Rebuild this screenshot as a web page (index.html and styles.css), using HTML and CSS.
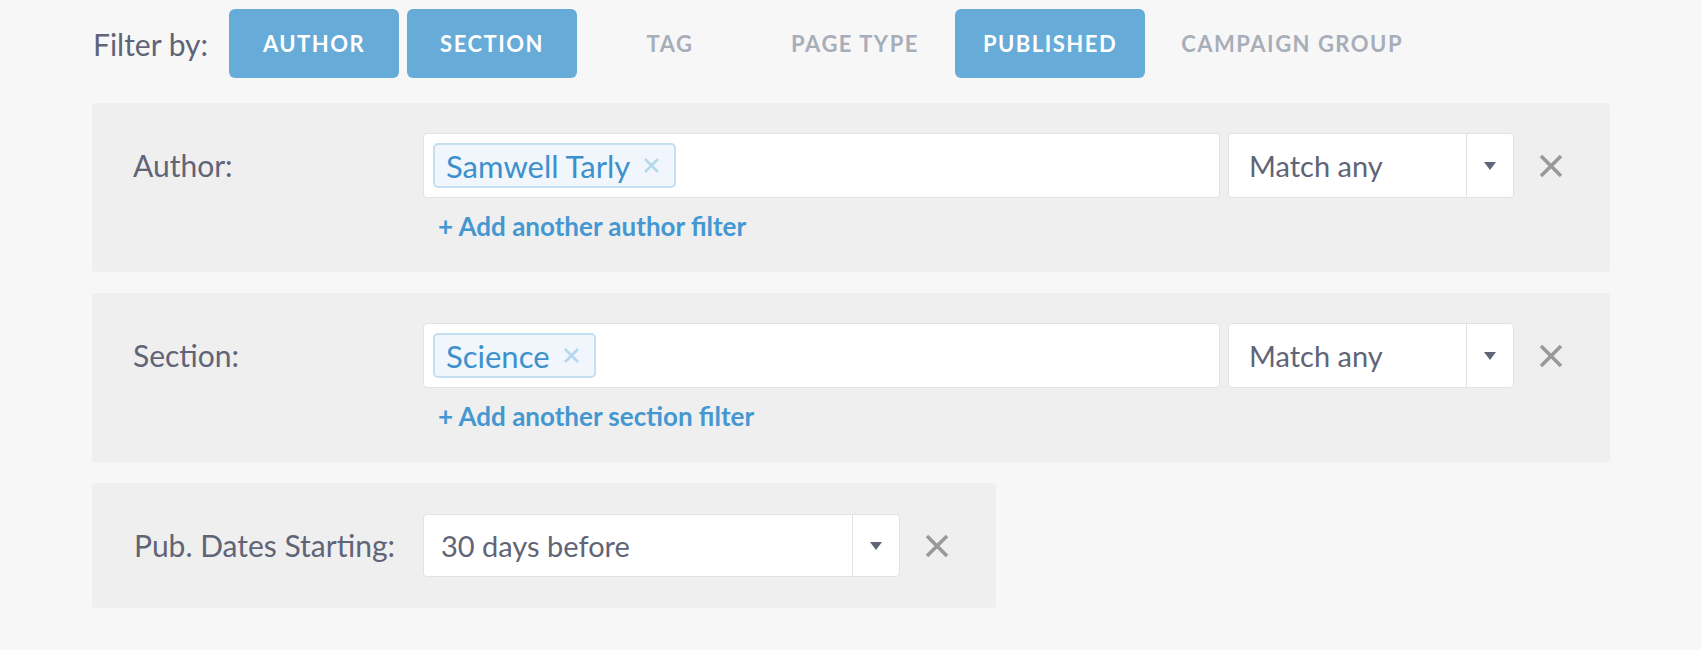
FILE: index.html
```html
<!DOCTYPE html>
<html lang="en">
<head>
    <meta charset="UTF-8">
    <title>Filters</title>
    <link rel="stylesheet" href="styles.css">
</head>
<body>
    <!-- Barre de choix des filtres -->
    <div class="filter-bar">
        <span class="filter-title">Filter by:</span>
        <div class="filter-buttons">
            <button class="filter-btn active">Author</button>
            <button class="filter-btn active">Section</button>
            <button class="filter-btn">Tag</button>
            <button class="filter-btn">Page Type</button>
            <button class="filter-btn active">Published</button>
            <button class="filter-btn">Campaign Group</button>
        </div>
    </div>

    <div class="panels">
        <!-- Filtre auteur -->
        <div class="panel">
            <div class="panel-label">Author:</div>
            <div class="panel-body">
                <div class="panel-row">
                    <div class="tag-input">
                        <span class="chip">Samwell Tarly<svg class="chip-x" width="17" height="17" viewBox="0 0 17 17"><path d="M2 2L15 15M15 2L2 15" stroke="#b5d8ee" stroke-width="2.6"/></svg></span>
                    </div>
                    <div class="select match">
                        <span class="select-value">Match any</span>
                        <span class="select-arrow"><span class="caret"></span></span>
                    </div>
                    <svg class="close" width="24" height="24" viewBox="0 0 24 24"><path d="M2 2L22 22M22 2L2 22" stroke="#999" stroke-width="3.6"/></svg>
                </div>
                <a class="add-link" href="#">+ Add another author filter</a>
            </div>
        </div>

        <!-- Filtre section -->
        <div class="panel">
            <div class="panel-label">Section:</div>
            <div class="panel-body">
                <div class="panel-row">
                    <div class="tag-input">
                        <span class="chip">Science<svg class="chip-x" width="17" height="17" viewBox="0 0 17 17"><path d="M2 2L15 15M15 2L2 15" stroke="#b5d8ee" stroke-width="2.6"/></svg></span>
                    </div>
                    <div class="select match">
                        <span class="select-value">Match any</span>
                        <span class="select-arrow"><span class="caret"></span></span>
                    </div>
                    <svg class="close" width="24" height="24" viewBox="0 0 24 24"><path d="M2 2L22 22M22 2L2 22" stroke="#999" stroke-width="3.6"/></svg>
                </div>
                <a class="add-link" href="#">+ Add another section filter</a>
            </div>
        </div>

        <!-- Filtre date de publication -->
        <div class="panel panel-small">
            <div class="panel-label">Pub. Dates Starting:</div>
            <div class="panel-row">
                <div class="select dates">
                    <span class="select-value">30 days before</span>
                    <span class="select-arrow"><span class="caret"></span></span>
                </div>
                <svg class="close" width="24" height="24" viewBox="0 0 24 24"><path d="M2 2L22 22M22 2L2 22" stroke="#999" stroke-width="3.6"/></svg>
            </div>
        </div>
    </div>
</body>
</html>
```

FILE: styles.css
```css
body {
    margin: 0;
    background-color: #f7f7f7;
    font-family: Lato, "Open Sans", sans-serif;
    color: #5f6477;
}

/* Barre du haut */
.filter-bar {
    display: flex;
    align-items: center;
    padding: 9px 0 0 93px;
}

.filter-title {
    font-size: 30px;
    margin-right: 21px;
}

.filter-buttons {
    display: flex;
    gap: 8px;
}

.filter-btn {
    height: 69px;
    min-width: 170px;
    padding: 0 28px;
    border: none;
    border-radius: 6px;
    background: transparent;
    color: #a7aeb9;
    font-family: inherit;
    font-size: 22px;
    font-weight: 700;
    letter-spacing: 1.5px;
    text-transform: uppercase;
}

.filter-btn.active {
    background-color: #67acd8;
    color: #ffffff;
}

/* Panneaux de filtres */
.panels {
    display: flex;
    flex-direction: column;
    align-items: flex-start;
    gap: 21px;
    margin: 25px 0 0 92px;
}

.panel {
    display: flex;
    width: 1518px;
    box-sizing: border-box;
    padding: 30px 47px 30px 41px;
    background-color: #efefef;
    border-radius: 4px;
}

.panel-small {
    width: 904px;
    padding: 31px 47px 31px 42px;
}

.panel-label {
    width: 290px;
    flex-shrink: 0;
    font-size: 30px;
    line-height: 65px;
}

.panel-small .panel-label {
    width: 289px;
    line-height: 63px;
}

.panel-body {
    flex: 1;
}

.panel-row {
    display: flex;
    align-items: center;
}

.tag-input {
    flex: 1;
    height: 65px;
    box-sizing: border-box;
    display: flex;
    align-items: center;
    padding: 0 9px;
    background: #ffffff;
    border: 1px solid #e2e2e2;
    border-radius: 4px;
}

.chip {
    display: inline-flex;
    align-items: center;
    height: 45px;
    box-sizing: border-box;
    padding: 0 14px 0 11px;
    background: #f0f6fc;
    border: 2px solid #c4dff1;
    border-radius: 5px;
    color: #3c91cd;
    font-size: 31px;
}

.chip-x {
    margin-left: 13px;
}

.select {
    display: flex;
    align-items: stretch;
    height: 65px;
    box-sizing: border-box;
    background: #ffffff;
    border: 1px solid #e2e2e2;
    border-radius: 4px;
}

.select.match {
    width: 286px;
    margin-left: 8px;
}

.select.dates {
    width: 477px;
    height: 63px;
}

.select-value {
    flex: 1;
    display: flex;
    align-items: center;
    padding-left: 20px;
    font-size: 29px;
}

.dates .select-value {
    padding-left: 17px;
}

.select-arrow {
    width: 46px;
    display: flex;
    align-items: center;
    justify-content: center;
    border-left: 1px solid #e2e2e2;
}

.caret {
    width: 0;
    height: 0;
    border-left: 6px solid transparent;
    border-right: 6px solid transparent;
    border-top: 8px solid #5f6477;
}

.close {
    margin-left: 25px;
    flex-shrink: 0;
}

.add-link {
    display: inline-block;
    margin: 12px 0 0 15px;
    color: #4497d1;
    font-size: 26px;
    font-weight: 700;
    text-decoration: none;
}
```
